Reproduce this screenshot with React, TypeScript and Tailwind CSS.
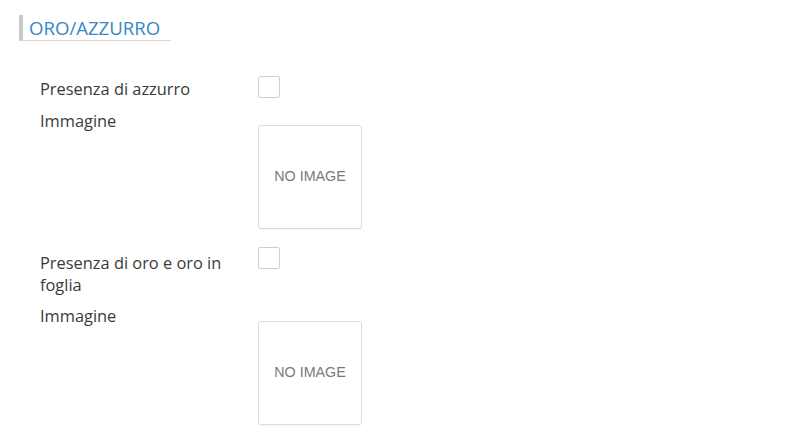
import React from 'react';

type Field = {
  label: string;
  boxTop: string;
  imgTop: string;
  rowGap: string;
};

const fields: Field[] = [
  { label: 'Presenza di azzurro', boxTop: '-mt-[2px]', imgTop: 'mt-[15px]', rowGap: 'mb-[10px]' },
  { label: 'Presenza di oro e oro in foglia', boxTop: '-mt-[5px]', imgTop: 'mt-[16px]', rowGap: 'mb-[9px]' },
];

function NoImage({ className }: { className: string }) {
  return (
    <div
      className={`${className} w-[104px] h-[104px] border border-[#dcdcdc] rounded-[3px] flex items-center justify-center text-[14.3px] text-[#7a7a7a] shadow-[0_1px_1px_rgba(0,0,0,0.04)]`}
      style={{ fontFamily: '"Liberation Sans", Arial, sans-serif' }}
    >
      NO IMAGE
    </div>
  );
}

export default function App() {
  return (
    <div
      className="w-[804px] h-[436px] bg-white overflow-hidden pt-[15px] pl-[19px] text-[#3a3a3a]"
      style={{ fontFamily: '"Open Sans", sans-serif' }}
    >
      {/* section title */}
      <div className="w-[152px] h-[26px] border-l-4 border-[#c8c8c8] border-b border-b-[#d8d8d8] pl-[6px] pt-[1px] text-[18.6px] leading-[24px] text-[#3a87c4]">
        ORO/AZZURRO
      </div>

      <div className="pl-[21px] pt-[37px]">
        {fields.map((f, i) => (
          <div key={i} className={i === 0 ? '' : 'mt-[23px]'}>
            <div className={`flex ${f.rowGap}`}>
              <div className="w-[218px] pr-[8px] text-[16.4px] leading-[22px]">{f.label}</div>
              <div className={`${f.boxTop} w-[22px] h-[22px] border border-[#cfcfcf] rounded-[2px] bg-white`} />
            </div>
            <div className="flex">
              <div className="w-[218px] text-[16.4px] leading-[22px]">Immagine</div>
              <NoImage className={f.imgTop} />
            </div>
          </div>
        ))}
      </div>
    </div>
  );
}
